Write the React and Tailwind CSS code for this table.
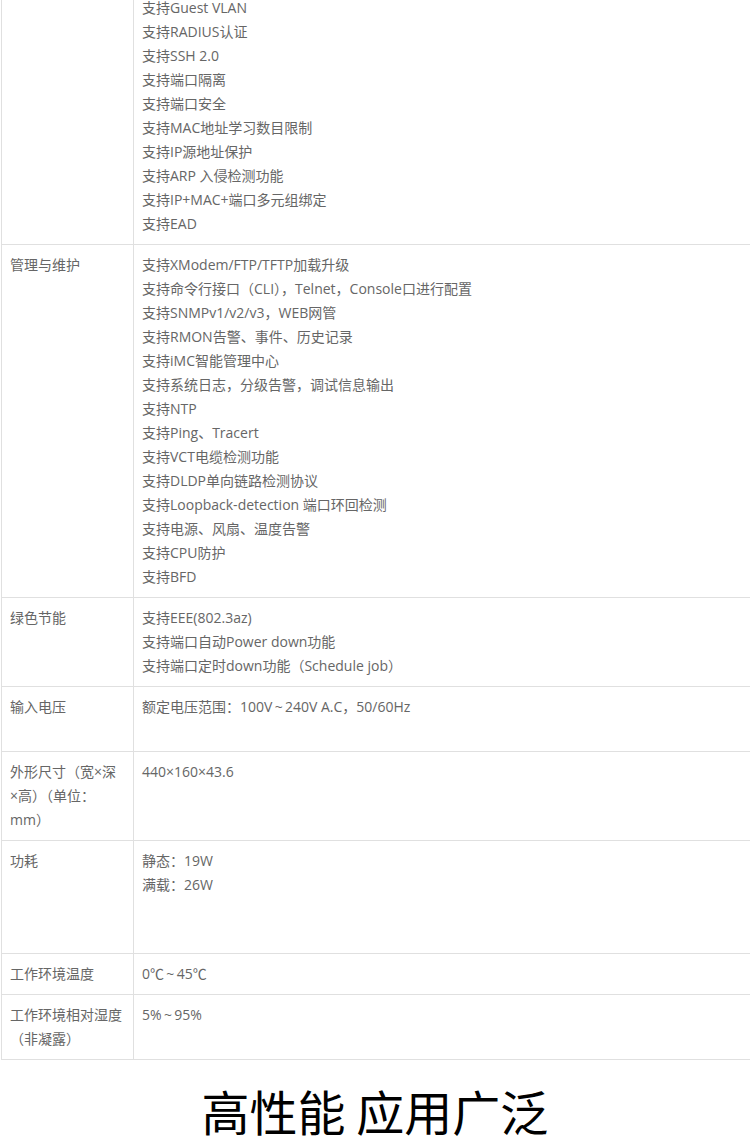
import React from 'react';

const rows = [
  {
    label: [],
    items: [
      '支持Guest VLAN',
      '支持RADIUS认证',
      '支持SSH 2.0',
      '支持端口隔离',
      '支持端口安全',
      '支持MAC地址学习数目限制',
      '支持IP源地址保护',
      '支持ARP 入侵检测功能',
      '支持IP+MAC+端口多元组绑定',
      '支持EAD',
    ],
  },
  {
    label: ['管理与维护'],
    items: [
      '支持XModem/FTP/TFTP加载升级',
      '支持命令行接口（CLI），Telnet，Console口进行配置',
      '支持SNMPv1/v2/v3，WEB网管',
      '支持RMON告警、事件、历史记录',
      '支持iMC智能管理中心',
      '支持系统日志，分级告警，调试信息输出',
      '支持NTP',
      '支持Ping、Tracert',
      '支持VCT电缆检测功能',
      '支持DLDP单向链路检测协议',
      '支持Loopback-detection 端口环回检测',
      '支持电源、风扇、温度告警',
      '支持CPU防护',
      '支持BFD',
    ],
  },
  {
    label: ['绿色节能'],
    items: ['支持EEE(802.3az)', '支持端口自动Power down功能', '支持端口定时down功能（Schedule job）'],
  },
  { label: ['输入电压'], items: ['额定电压范围：100V\u2009~\u2009240V A.C，50/60Hz'], height: 'h-[65px]' },
  { label: ['外形尺寸（宽×深', '×高）（单位：', 'mm）'], items: ['440×160×43.6'] },
  { label: ['功耗'], items: ['静态：19W', '满载：26W'], height: 'h-[113px]' },
  { label: ['工作环境温度'], items: ['0℃\u2009~\u200945℃'] },
  { label: ['工作环境相对湿度', '（非凝露）'], items: ['5%\u2009~\u200995%'] },
];

export default function App() {
  return (
    <div className="w-[750px] overflow-hidden bg-white" style={{ fontFamily: '"Open Sans", "Noto Sans CJK SC", sans-serif' }}>
      {/* spec table, first row is cut off at the top */}
      <div className="-mt-3 pl-px w-[800px] text-[14px] leading-6 text-[#666]">
        {rows.map((row, i) => (
          <div key={i} className={`flex border-b border-[#e0e0e0] ${row.height || ''}`}>
            <div className="w-[133px] shrink-0 border-l border-r border-[#e0e0e0] px-2 py-2">
              {row.label.map((l, j) => (
                <div key={j} className="whitespace-nowrap">{l}</div>
              ))}
            </div>
            <div className="flex-1 px-2 py-2">
              {row.items.map((t, j) => (
                <div key={j} className="whitespace-nowrap">{t}</div>
              ))}
            </div>
          </div>
        ))}
      </div>

      <h2 className="mt-[14px] text-center text-[48px] leading-[72px] font-normal text-black" style={{ fontFamily: '"Noto Sans CJK SC", sans-serif' }}>
        高性能 应用广泛
      </h2>
    </div>
  );
}
